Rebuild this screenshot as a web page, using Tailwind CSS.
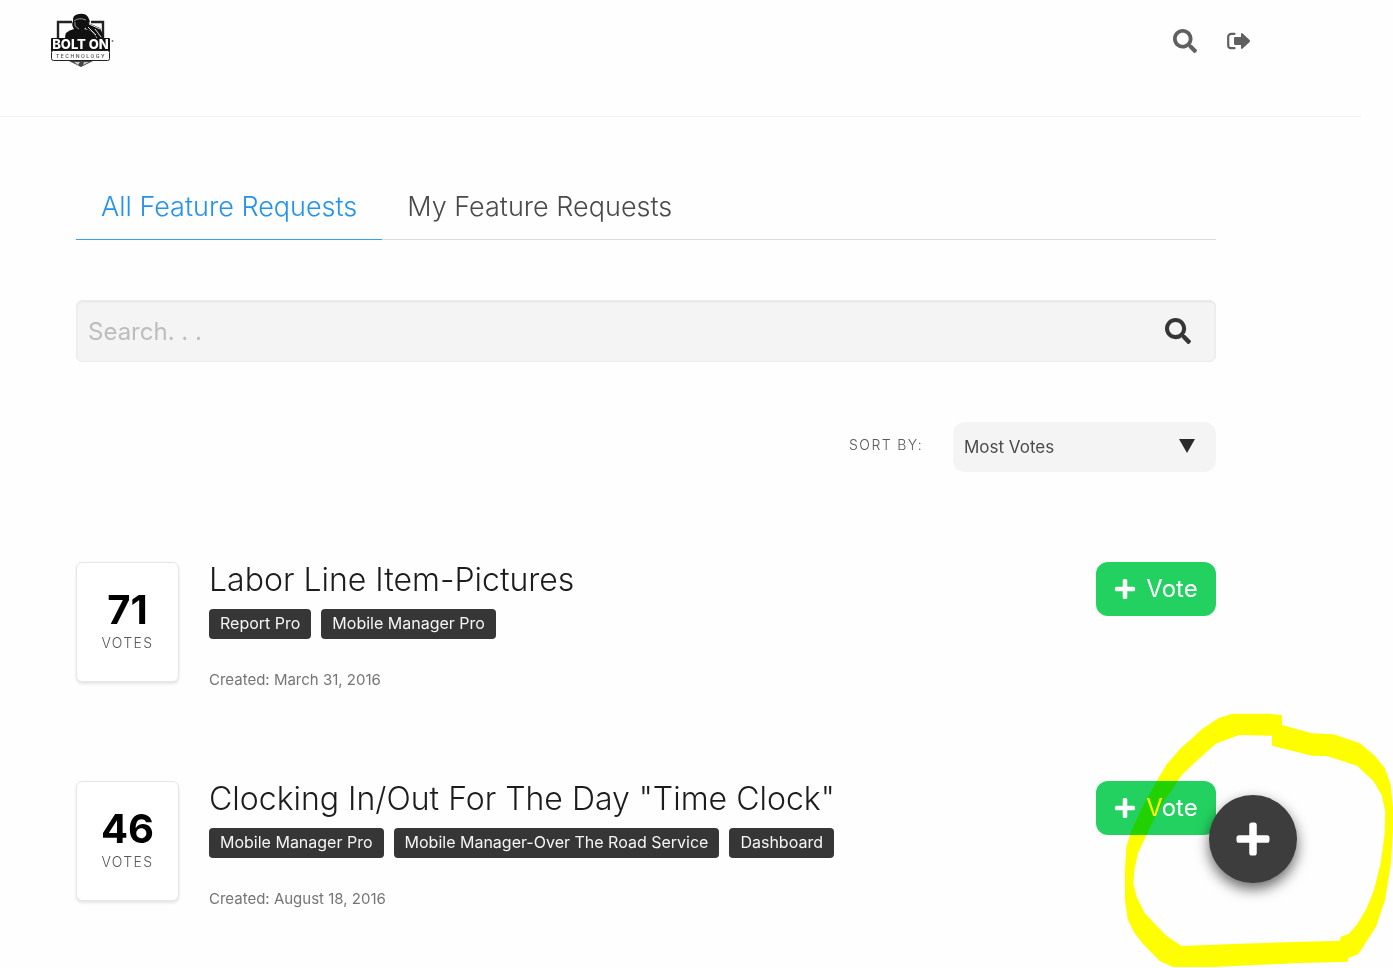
<!DOCTYPE html>
<html lang="en">
<head>
<meta charset="utf-8">
<meta name="viewport" content="width=device-width, initial-scale=1">
<title>Feature Requests</title>
<script src="https://cdn.jsdelivr.net/npm/@tailwindcss/browser@4"></script>
</head>
<body class="relative min-h-screen overflow-x-hidden bg-[#fefefe] font-['Inter',sans-serif] font-normal text-[#5a5a5a]">
<svg class="hidden" aria-hidden="true">
  <symbol id="search" viewBox="0 0 512 512"><path fill="currentColor" d="M505 442.7L405.3 343c-4.500-4.500-10.600-7-17-7H372c27.600-35.300 44-79.700 44-128C416 93.100 322.900 0 208 0S0 93.100 0 208s93.100 208 208 208c48.300 0 92.700-16.400 128-44v16.300c0 6.400 2.500 12.500 7 17l99.700 99.700c9.400 9.400 24.600 9.400 33.900 0l28.300-28.300c9.400-9.400 9.400-24.600.1-34zM208 336c-70.700 0-128-57.200-128-128 0-70.700 57.200-128 128-128 70.700 0 128 57.200 128 128 0 70.700-57.200 128-128 128z"/></symbol>
  <symbol id="sign-out" viewBox="0 0 24 20"><path fill="none" stroke="currentColor" stroke-width="2.200" stroke-linecap="round" d="M7.500 2.800H4.200a3 3 0 0 0-3 3v8.400a3 3 0 0 0 3 3h3.300"/><path fill="currentColor" d="M7 7.200q0-1.200 1.200-1.200H14V3.300q0-1.900 1.600-.9l7 6.600q1.100 1 0 2l-7 6.600q-1.600 1-1.600-.9V14H8.200Q7 14 7 12.800z"/></symbol>
  <symbol id="plus" viewBox="0 0 24 24"><path fill="currentColor" d="M11.200 1h1.600q1.700 0 1.700 1.700v6.800h6.800q1.700 0 1.700 1.700v1.600q0 1.700-1.700 1.700h-6.800v6.800q0 1.700-1.700 1.700h-1.600q-1.700 0-1.700-1.700v-6.800H2.700Q1 14.500 1 12.800v-1.600q0-1.700 1.700-1.700h6.800V2.700Q9.500 1 11.200 1z"/></symbol>
</svg>

<header class="mr-8 flex h-[117px] items-start justify-between border-b border-[#f3f3f3] pr-[110px] pl-[50px]">
  <a href="#" aria-label="Bolt On Technology" class="mt-3">
    <svg class="h-14 w-16" viewBox="0 0 64 56">
      <path d="M8 27V10h14M41 10h12v17" fill="none" stroke="#222" stroke-width="2.400"/>
      <path d="M19 49h24l-12 6z" fill="#444"/>
      <path d="M24 50h6l-2 3zM34 50h5l-6 3z" fill="#ccc"/>
      <path d="M15 27Q14 19 24 17Q21 13 23 9Q22 3 29 2Q37 1 39 7L40 10L37 12Q37 16 34 17Q44 18 47 27z" fill="#111"/>
      <path d="M36 10L50 16L54 25L48 27L43 20L36 17z" fill="#111"/>
      <path d="M24 9Q29 5 36 8M25 10v4l4 3" fill="none" stroke="#999" stroke-width="1"/>
      <path d="M39 12L50 17M38 15l8 8M45 17l6 8" fill="none" stroke="#ddd" stroke-width="1"/>
      <rect x="1" y="26" width="59" height="14" rx="1" fill="#111"/>
      <rect x="1.500" y="38.500" width="58" height="10" rx="2" fill="#fff" stroke="#222"/>
      <text x="30.500" y="37" text-anchor="middle" font-family="Inter" font-size="13" font-weight="800" fill="#fff">BOLT ON</text>
      <text x="31" y="46" text-anchor="middle" font-family="Inter" font-size="5" font-weight="600" letter-spacing="1.500" fill="#555">TECHNOLOGY</text>
      <circle cx="62.500" cy="29" r="1" fill="#777"/>
    </svg>
  </a>
  <nav class="mt-[29px] flex items-center gap-[30px] text-[#606060]">
    <button type="button" aria-label="Search"><svg class="size-6"><use href="#search"/></svg></button>
    <a href="#" aria-label="Sign out"><svg class="h-5 w-6"><use href="#sign-out"/></svg></a>
  </nav>
</header>

<main class="pr-[177px] pl-[76px]">
  <nav class="mt-[59px] flex border-b border-[#dbdbdb] text-[27px] leading-[40px] font-light text-[#4a4a4a]">
    <a href="#" aria-current="page" class="-mb-px px-[25px] pt-[11px] pb-[13px] text-[#2493ee] shadow-[inset_0_-1px_0_#3a9fee]">All Feature Requests</a>
    <a href="#" class="px-[25px] pt-[11px] pb-3">My Feature Requests</a>
  </nav>

  <form class="mt-[60px] flex h-[62px] items-center rounded-md border border-[#ececec] bg-[#f4f4f4] shadow-[inset_0_1px_2px_rgba(10,10,10,0.07)]">
    <input type="search" aria-label="Search feature requests" placeholder="Search. . ." class="h-full min-w-0 flex-1 bg-transparent px-[11px] text-2xl placeholder:text-[#bdbdbd] focus:outline-none">
    <button type="submit" aria-label="Submit search" class="mr-6 text-[#363636]"><svg class="size-[26px]"><use href="#search"/></svg></button>
  </form>

  <div class="mt-[60px] flex items-center justify-end gap-[30px]">
    <label for="sort" class="pb-1 text-sm font-light tracking-widest">SORT BY:</label>
    <div class="relative">
      <select id="sort" class="h-[50px] w-[263px] appearance-none rounded-xl bg-[#f4f4f4] px-[11px] pt-[2px] text-[17px] text-[#4a4a4a]">
        <option>Most Votes</option>
        <option>Newest</option>
      </select>
      <svg class="pointer-events-none absolute top-[17px] right-[21px] h-[14px] w-4" viewBox="0 0 16 14"><path d="M0 0h16L8 14z" fill="#2b2b2b"/></svg>
    </div>
  </div>

  <article class="mt-[90px] flex items-start">
    <div class="flex h-[120px] w-[103px] flex-col items-center rounded-md border border-[#e6e6e6] bg-white pt-6 shadow-[0_2px_3px_rgba(10,10,10,0.1)]">
      <strong class="text-[40px] leading-[46px] font-bold text-black">71</strong>
      <span class="text-sm leading-5 font-light tracking-widest">VOTES</span>
    </div>
    <div class="ml-[30px] flex-1">
      <h2 class="text-[32px] leading-9 font-light text-[#1c1c1c]">Labor Line Item-Pictures</h2>
      <ul class="mt-[11px] flex gap-[10px] text-base leading-[29px] text-[#f5f5f5]">
        <li class="h-[30px] rounded-sm bg-[#363636] px-[11px]">Report Pro</li>
        <li class="h-[30px] rounded-sm bg-[#363636] px-[11px]">Mobile Manager Pro</li>
      </ul>
      <p class="mt-[30px] text-[15px] leading-[22px] text-[#757575]">Created: March 31, 2016</p>
    </div>
    <button type="button" class="flex h-[54px] w-[120px] items-center justify-center gap-[10px] rounded-xl bg-[#23d160] text-2xl text-white"><svg class="size-[22px]"><use href="#plus"/></svg>Vote</button>
  </article>

  <article class="mt-[90px] flex items-start">
    <div class="flex h-[120px] w-[103px] flex-col items-center rounded-md border border-[#e6e6e6] bg-white pt-6 shadow-[0_2px_3px_rgba(10,10,10,0.1)]">
      <strong class="text-[40px] leading-[46px] font-bold text-black">46</strong>
      <span class="text-sm leading-5 font-light tracking-widest">VOTES</span>
    </div>
    <div class="ml-[30px] flex-1">
      <h2 class="text-[32px] leading-9 font-light text-[#1c1c1c]">Clocking In/Out For The Day "Time Clock"</h2>
      <ul class="mt-[11px] flex gap-[10px] text-base leading-[29px] text-[#f5f5f5]">
        <li class="h-[30px] rounded-sm bg-[#363636] px-[11px]">Mobile Manager Pro</li>
        <li class="h-[30px] rounded-sm bg-[#363636] px-[11px]">Mobile Manager-Over The Road Service</li>
        <li class="h-[30px] rounded-sm bg-[#363636] px-[11px]">Dashboard</li>
      </ul>
      <p class="mt-[30px] text-[15px] leading-[22px] text-[#757575]">Created: August 18, 2016</p>
    </div>
    <button type="button" class="flex h-[54px] w-[120px] items-center justify-center gap-[10px] rounded-xl bg-[#23d160] text-2xl text-white"><svg class="size-[22px]"><use href="#plus"/></svg>Vote</button>
  </article>
</main>

<button type="button" aria-label="Add feature request" class="absolute top-[795px] right-[96px] flex size-[88px] items-center justify-center rounded-full bg-[#3d3d3d] text-white shadow-[0_6px_14px_rgba(0,0,0,0.6)]"><svg class="size-9"><use href="#plus"/></svg></button>

<!-- Highlighter ring around the add button -->
<svg class="pointer-events-none absolute top-[700px] right-0 h-[268px] w-[283px] mix-blend-multiply" viewBox="0 0 849 804" aria-hidden="true">
  <path fill="#ff0" fill-rule="evenodd" d="M367 41L480 41L516 46L516 75L605 100L670 103L750 130L795 168L825 205L842 255L849 320L849 390L843 490L825 600L798 680L745 763L714 774L714 785L550 790L310 801L190 801L150 784L100 733L72 697L53 658L45 600L45 510L49 440L65 390L95 325L145 235L170 193L215 142L245 116L275 88L325 55ZM388 105L486 107L486 137L605 167L650 168L741 197L790 243L815 285L826 335L824 400L812 490L792 570L770 625L744 670L716 702L692 710L690 722L530 727L370 732L215 738L170 708L104 640L80 590L70 550L73 510L84 460L110 404L145 330L203 243L215 226L235 206L290 155L320 130Z"/>
</svg>
</body>
</html>
